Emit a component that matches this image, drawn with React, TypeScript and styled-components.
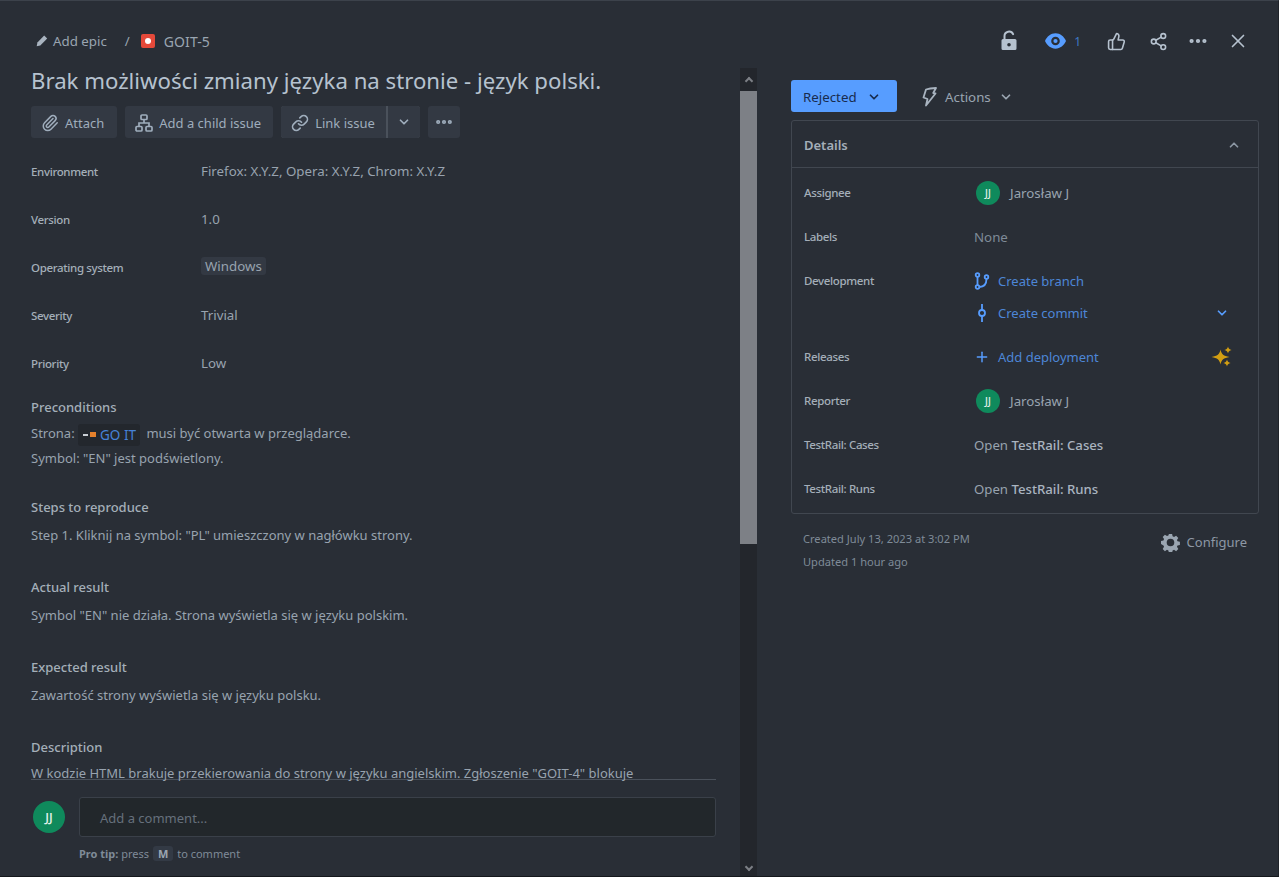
import React from 'react';
import styled, { createGlobalStyle } from 'styled-components';
import { ChevronDown, ChevronUp, Ellipsis, Paperclip, Link, Plus, Share2, ThumbsUp, X } from 'lucide-react';

const GlobalStyle = createGlobalStyle`
  html, body { margin: 0; padding: 0; background: #292e36; }
  body { font-family: 'Noto Sans', 'Liberation Sans', sans-serif; color: #a9b4c0; }
  * { box-sizing: border-box; }
`;

const fields = [
  { label: 'Environment', value: 'Firefox: X.Y.Z, Opera: X.Y.Z, Chrom: X.Y.Z' },
  { label: 'Version', value: '1.0' },
  { label: 'Operating system', value: 'Windows', tag: true },
  { label: 'Severity', value: 'Trivial' },
  { label: 'Priority', value: 'Low' },
];

const App: React.FC = () => {
  return (
    <Page>
      <GlobalStyle />
      <Header>
        <Breadcrumbs>
          <PencilIcon />
          <CrumbText>Add epic</CrumbText>
          <Slash>/</Slash>
          <BugIcon />
          <IssueKey>GOIT-5</IssueKey>
        </Breadcrumbs>
        <HeaderActions>
          <LockIcon />
          <WatchGroup>
            <EyeIcon />
            <WatchCount>1</WatchCount>
          </WatchGroup>
          <ThumbsUp size={19} strokeWidth={2} />
          <ShareSlot>
            <Share2 size={19} strokeWidth={2} />
          </ShareSlot>
          <Ellipsis size={22} strokeWidth={2.6} />
          <X size={22} strokeWidth={1.8} />
        </HeaderActions>
      </Header>
      <Main>
        <LeftPane>
          <LeftColumn>
            <ScrollArea>
              <Title>Brak możliwości zmiany języka na stronie - język polski.</Title>
              <Toolbar>
                <ToolButton $endPad={13}>
                  <Paperclip size={18} strokeWidth={2} />
                  Attach
                </ToolButton>
                <ToolButton $endPad={12}>
                  <HierarchyIcon />
                  Add a child issue
                </ToolButton>
                <SplitGroup>
                  <ToolButton $endPad={11} $joined>
                    <Link size={18} strokeWidth={2.2} />
                    Link issue
                  </ToolButton>
                  <CaretButton>
                    <ChevronDown size={14} strokeWidth={3} />
                  </CaretButton>
                </SplitGroup>
                <MoreButton>
                  <Ellipsis size={20} strokeWidth={3} />
                </MoreButton>
              </Toolbar>
              <FieldList>
                {fields.map((f) => (
                  <FieldRow key={f.label}>
                    <FieldLabel>{f.label}</FieldLabel>
                    {f.tag ? <Tag>{f.value}</Tag> : <FieldValue>{f.value}</FieldValue>}
                  </FieldRow>
                ))}
              </FieldList>
              <Section $gap={27}>
                <SectionTitle>Preconditions</SectionTitle>
                <Paragraphs>
                  <Paragraph>
                    Strona:{' '}
                    <SmartLink>
                      <LinkFavicon />
                      GO IT
                    </SmartLink>{' '}
                    musi być otwarta w przeglądarce.
                  </Paragraph>
                  <Paragraph>Symbol: "EN" jest podświetlony.</Paragraph>
                </Paragraphs>
              </Section>
              <Section>
                <SectionTitle>Steps to reproduce</SectionTitle>
                <BodyText>Step 1. Kliknij na symbol: "PL" umieszczony w nagłówku strony.</BodyText>
              </Section>
              <Section>
                <SectionTitle>Actual result</SectionTitle>
                <BodyText>Symbol "EN" nie działa. Strona wyświetla się w języku polskim.</BodyText>
              </Section>
              <Section>
                <SectionTitle>Expected result</SectionTitle>
                <BodyText>Zawartość strony wyświetla się w języku polsku.</BodyText>
              </Section>
              <Section $gap={0}>
                <SectionTitle>Description</SectionTitle>
                <BodyTight>W kodzie HTML brakuje przekierowania do strony w języku angielskim. Zgłoszenie "GOIT-4" blokuje</BodyTight>
              </Section>
            </ScrollArea>
            <CommentArea>
              <CommentRow>
                <Avatar $size={32}>JJ</Avatar>
                <CommentInput>Add a comment...</CommentInput>
              </CommentRow>
              <ProTip>
                <strong>Pro tip:</strong> press <Kbd>M</Kbd> to comment
              </ProTip>
            </CommentArea>
          </LeftColumn>
          <Scrollbar>
            <ScrollArrow><ArrowGlyph /></ScrollArrow>
            <ScrollThumb />
            <ScrollTrack />
            <ScrollArrow><ArrowGlyph $down /></ScrollArrow>
          </Scrollbar>
        </LeftPane>
        <RightPane>
          <StatusRow>
            <StatusButton>
              Rejected
              <ChevronDown size={14} strokeWidth={3} />
            </StatusButton>
            <ActionsButton>
              <BoltIcon />
              <span>Actions</span>
              <ChevronDown size={14} strokeWidth={3} />
            </ActionsButton>
          </StatusRow>
          <DetailsCard>
            <DetailsHeader>
              Details
              <ChevronUp size={14} strokeWidth={3} />
            </DetailsHeader>
            <DetailsBody>
              <DetailRow>
                <DetailLabel>Assignee</DetailLabel>
                <Person><Avatar $size={24}>JJ</Avatar>Jarosław J</Person>
              </DetailRow>
              <DetailRow>
                <DetailLabel>Labels</DetailLabel>
                <Muted>None</Muted>
              </DetailRow>
              <DetailRow>
                <DetailLabel>Development</DetailLabel>
                <ActionLink><BranchIcon />Create branch</ActionLink>
              </DetailRow>
              <DetailRowShort>
                <span />
                <ActionLink>
                  <CommitIcon />
                  Create commit
                  <EndSlot $tint="#579dff" $inset={17}><ChevronDown size={14} strokeWidth={3} /></EndSlot>
                </ActionLink>
              </DetailRowShort>
              <DetailRow>
                <DetailLabel>Releases</DetailLabel>
                <ActionLink>
                  <Plus size={16} strokeWidth={2.2} />
                  Add deployment
                  <EndSlot $tint="#d29e12" $inset={13}><SparkleIcon /></EndSlot>
                </ActionLink>
              </DetailRow>
              <DetailRow>
                <DetailLabel>Reporter</DetailLabel>
                <Person><Avatar $size={24}>JJ</Avatar>Jarosław J</Person>
              </DetailRow>
              <DetailRow>
                <DetailLabel>TestRail: Cases</DetailLabel>
                <Plain>Open <b>TestRail: Cases</b></Plain>
              </DetailRow>
              <DetailRow>
                <DetailLabel>TestRail: Runs</DetailLabel>
                <Plain>Open <b>TestRail: Runs</b></Plain>
              </DetailRow>
            </DetailsBody>
          </DetailsCard>
          <MetaRow>
            <MetaText>
              <div>Created July 13, 2023 at 3:02 PM</div>
              <div>Updated 1 hour ago</div>
            </MetaText>
            <Configure><GearIcon />Configure</Configure>
          </MetaRow>
        </RightPane>
      </Main>
    </Page>
  );
};

export default App;

const PencilIcon = () => (
  <svg width="14" height="14" viewBox="0 0 14 14" fill="#a9b4c0">
    <path d="M9.200 1.600l3 3-6.900 6.900-3.600.8.700-3.700z" />
  </svg>
);

const BugIcon = () => (
  <svg width="16" height="16" viewBox="0 0 16 16">
    <rect width="14" height="14" x="1" y="1" rx="2" fill="#e5493a" />
    <circle cx="8" cy="8" r="3" fill="#fff" />
  </svg>
);

const LockIcon = () => (
  <svg width="16" height="22" viewBox="0 0 16 22">
    <path d="M3.500 9V6a4.500 4.500 0 0 1 8.600-1.800" fill="none" stroke="#b6c2cf" strokeWidth="2" strokeLinecap="round" />
    <path fillRule="evenodd" fill="#b6c2cf" d="M2 9h12a1.500 1.500 0 0 1 1.500 1.500v8A1.500 1.500 0 0 1 14 20H2A1.500 1.500 0 0 1 .5 18.500v-8A1.500 1.500 0 0 1 2 9zm6 4a1.800 1.800 0 1 0 0 3.600A1.800 1.800 0 0 0 8 13z" />
  </svg>
);

const EyeIcon = () => (
  <svg width="21" height="16" viewBox="0 0 22 16">
    <path fillRule="evenodd" fill="#579dff" d="M11 0c5 0 9 3.500 11 8-2 4.500-6 8-11 8S2 12.500 0 8c2-4.500 6-8 11-8zm0 3.500a4.500 4.500 0 1 0 0 9 4.500 4.500 0 0 0 0-9zm0 2.300a2.200 2.200 0 1 1 0 4.400 2.200 2.200 0 0 1 0-4.400z" />
  </svg>
);

const HierarchyIcon = () => (
  <svg width="18" height="18" viewBox="0 0 18 18" fill="none" stroke="currentColor" strokeWidth="1.700">
    <rect x="6" y="1" width="6" height="4.500" rx="1" />
    <rect x="1" y="12.500" width="6" height="4.500" rx="1" />
    <rect x="11" y="12.500" width="6" height="4.500" rx="1" />
    <path d="M9 5.500V9M4 12.500V9h10v3.500" />
  </svg>
);

const BoltIcon = () => (
  <svg width="16" height="20" viewBox="0 0 16 20" fill="none" stroke="#a9b4c0" strokeWidth="1.800" strokeLinejoin="round">
    <path d="M5 2.500c3-1 6-1.300 10-1.500l-2.800 5 2.300.5L5 18.500l1.500-6.500-4-1.500z" />
  </svg>
);

const BranchIcon = () => (
  <svg width="16" height="18" viewBox="0 0 16 18" fill="none" stroke="#579dff" strokeWidth="1.800">
    <circle cx="3.500" cy="3" r="1.800" />
    <circle cx="3.500" cy="15" r="1.800" />
    <circle cx="12.500" cy="5" r="1.800" />
    <path d="M3.500 5v8M5.300 15c4 0 7.200-2 7.200-8.200" />
  </svg>
);

const CommitIcon = () => (
  <svg width="16" height="18" viewBox="0 0 16 18" fill="none" stroke="#579dff" strokeWidth="1.800">
    <circle cx="8" cy="9" r="3" />
    <path d="M8 0v6M8 12v6" />
  </svg>
);

const SparkleIcon = () => (
  <svg width="22" height="22" viewBox="0 0 22 22" fill="currentColor">
    <path d="M9.500 3.500c1 4.800 3 6.500 9 7.500-6 1-8 2.700-9 7.500-1-4.800-3-6.500-9-7.500 6-1 8-2.700 9-7.500z" />
    <path d="M17 .5c.4 2.100 1.300 3 3.600 3.500-2.300.5-3.200 1.400-3.600 3.500-.4-2.100-1.300-3-3.600-3.500 2.300-.5 3.200-1.400 3.600-3.500z" />
    <path d="M16 13.500c.4 2.100 1.300 3 3.600 3.500-2.300.5-3.200 1.400-3.600 3.500-.4-2.100-1.300-3-3.600-3.500 2.300-.5 3.200-1.400 3.600-3.500z" />
  </svg>
);

const GearIcon = () => (
  <svg width="19" height="19" viewBox="0 0 20 20">
    <path
      fill="#9aa5b1"
      fillRule="evenodd"
      d="M8.300 1h3.400l.5 2.500 1.500.7 2.200-1.400 2.300 2.400-1.400 2.100.6 1.500 2.500.5v3.300l-2.500.5-.6 1.500 1.400 2.200-2.300 2.300-2.200-1.400-1.500.6-.5 2.600H8.300l-.5-2.600-1.500-.6-2.200 1.400-2.300-2.300 1.400-2.200-.6-1.500L0 11.600V8.300l2.600-.5.6-1.500-1.400-2.100 2.300-2.400 2.200 1.400 1.500-.7zM10 6a4 4 0 1 0 0 8 4 4 0 0 0 0-8z"
    />
  </svg>
);

const Page = styled.div`
  display: flex;
  flex-direction: column;
  width: 1279px;
  height: 877px;
  overflow: hidden;
  background: #292e36;
  border-top: 1px solid #3c424b;
  border-right: 1px solid #1f2329;
  border-bottom: 1px solid #15181c;
`;

const Header = styled.header`
  display: flex;
  align-items: center;
  justify-content: space-between;
  height: 67px;
  padding: 25px 29px 12px 35px;
  flex: none;
`;

const Breadcrumbs = styled.nav`
  display: flex;
  align-items: center;
  color: #9aa5b1;
  font-size: 13.300px;
  svg { flex: none; }
`;

const CrumbText = styled.span`
  margin-left: 4px;
`;

const IssueKey = styled.span`
  margin-left: 8px;
  font-size: 14px;
  letter-spacing: 0.1px;
`;

const Slash = styled.span`
  margin: 0 10px 0 18px;
`;

const HeaderActions = styled.div`
  display: flex;
  align-items: center;
  gap: 18px;
  color: #b6c2cf;
`;

const WatchGroup = styled.div`
  display: flex;
  align-items: center;
  gap: 8px;
  margin: 0 8px 0 10px;
`;

const WatchCount = styled.span`
  font-size: 12px;
  color: #3f78c4;
`;

const ShareSlot = styled.span`
  display: flex;
  margin: 0 1px 0 5px;
`;

const Main = styled.main`
  display: flex;
  flex: 1;
  min-height: 0;
`;

const LeftPane = styled.div`
  display: flex;
  width: 757px;
  flex: none;
`;

const LeftColumn = styled.div`
  display: flex;
  flex-direction: column;
  flex: 1;
  min-width: 0;
  padding: 0 24px 0 31px;
`;

const ScrollArea = styled.div`
  flex: none;
  height: 712px;
  border-bottom: 1px solid #4a515b;
`;

const Title = styled.h1`
  margin: 0;
  font-size: 22.200px;
  font-weight: 400;
  line-height: 26px;
  color: #b6c2cf;
`;

const Toolbar = styled.div`
  display: flex;
  gap: 8px;
  margin-top: 12px;
`;

const ToolButton = styled.div<{ $joined?: boolean; $endPad?: number }>`
  display: flex;
  align-items: center;
  gap: 6px;
  height: 32px;
  padding: 1px ${(p) => p.$endPad ?? 12}px 0 10px;
  border-radius: ${(p) => (p.$joined ? '3px 0 0 3px' : '3px')};
  background: #333943;
  color: #9fadbc;
  font-size: 13px;
  svg { flex: none; }
`;

const SplitGroup = styled.div`
  display: flex;
  gap: 2px;
  background: #4a515b;
  border-radius: 3px;
`;

const CaretButton = styled.div`
  display: flex;
  align-items: center;
  justify-content: center;
  width: 32px;
  height: 32px;
  border-radius: 0 3px 3px 0;
  background: #333943;
  color: #9fadbc;
`;

const MoreButton = styled(CaretButton)`
  border-radius: 3px;
`;

const FieldList = styled.div`
  display: flex;
  flex-direction: column;
  margin-top: 9px;
  margin-bottom: 10px;
`;

const FieldRow = styled.div`
  display: grid;
  grid-template-columns: 170px 1fr;
  align-items: center;
  height: 48px;
  justify-items: start;
`;

const FieldLabel = styled.span`
  font-size: 11.500px;
  font-weight: 500;
  letter-spacing: -0.35px;
  color: #a4aeb9;
`;

const FieldValue = styled.span`
  font-size: 13.300px;
  color: #98a3af;
`;

const Tag = styled.span`
  margin-bottom: 2px;
  padding: 0 4px;
  border-radius: 3px;
  background: #333943;
  font-size: 13.300px;
  line-height: 18px;
  color: #98a3af;
`;

const Section = styled.section<{ $gap?: number }>`
  margin-bottom: ${(p) => p.$gap ?? 32}px;
`;

const SectionTitle = styled.h3`
  margin: 0;
  font-size: 13px;
  font-weight: 500;
  line-height: 20px;
  color: #a4aeb9;
`;

const Paragraphs = styled.div`
  margin-top: 4px;
`;

const Paragraph = styled.p`
  margin: 0;
  font-size: 13px;
  line-height: 24px;
  color: #98a3af;
`;

const BodyText = styled.p`
  margin: 8px 0 0;
  font-size: 13px;
  line-height: 20px;
  color: #98a3af;
`;

const BodyTight = styled(BodyText)`
  margin-top: 6px;
  white-space: nowrap;
`;

const SmartLink = styled.span`
  display: inline-flex;
  align-items: center;
  gap: 4px;
  height: 22px;
  padding: 0 4px 0 5px;
  margin: 0 3px 0 0;
  border-radius: 3px;
  background: #23272d;
  color: #4682d8;
  font-size: 13.500px;
  vertical-align: middle;
`;

const LinkFavicon = styled.i`
  display: inline-block;
  width: 13px;
  height: 5px;
  background:
    linear-gradient(#c9ced4, #c9ced4) left center / 5px 2px no-repeat,
    linear-gradient(#e5812c, #e5812c) right center / 6px 5px no-repeat;
`;

const CommentArea = styled.div`
  flex: 1;
  padding-top: 17px;
`;

const CommentRow = styled.div`
  display: flex;
  align-items: center;
  gap: 14px;
  padding-left: 2px;
`;

const Avatar = styled.span<{ $size: number }>`
  display: inline-flex;
  align-items: center;
  justify-content: center;
  flex: none;
  width: ${(p) => p.$size}px;
  height: ${(p) => p.$size}px;
  border-radius: 50%;
  background: #0f8a5c;
  color: #e6f2ec;
  font-size: ${(p) => (p.$size > 28 ? 13 : 10)}px;
  font-weight: 500;
`;

const CommentInput = styled.div`
  flex: 1;
  height: 40px;
  padding: 1px 0 0 20px;
  display: flex;
  align-items: center;
  background: #22272b;
  border: 1px solid #3a4049;
  border-radius: 3px;
  color: #66707c;
  font-size: 13px;
`;

const ProTip = styled.div`
  margin: 9px 0 0 48px;
  font-size: 11px;
  color: #7f8b98;
  strong { font-weight: 700; }
`;

const Kbd = styled.span`
  display: inline-block;
  padding: 0 5px;
  margin: 0 1px;
  border-radius: 3px;
  background: #333a45;
  font-weight: 700;
  color: #9aa5b1;
`;

const Scrollbar = styled.div`
  display: flex;
  flex-direction: column;
  flex: none;
  width: 17px;
`;

const ScrollArrow = styled.div`
  display: flex;
  align-items: center;
  justify-content: center;
  height: 23px;
  flex: none;
  background: #23262c;
  &:last-child { height: 17px; }
`;

const ArrowGlyph = styled.i<{ $down?: boolean }>`
  width: 6px;
  height: 6px;
  border-left: 2px solid #7c7f85;
  border-top: 2px solid #7c7f85;
  transform: translateY(${(p) => (p.$down ? '-1px' : '1px')}) rotate(${(p) => (p.$down ? '225deg' : '45deg')});
`;

const ScrollThumb = styled.div`
  height: 453px;
  flex: none;
  background: #7d8086;
`;

const ScrollTrack = styled.div`
  flex: 1;
  background: #23262c;
`;

const RightPane = styled.aside`
  display: flex;
  flex-direction: column;
  flex: 1;
  min-width: 0;
  padding: 12px 19px 0 34px;
`;

const StatusRow = styled.div`
  display: flex;
  align-items: center;
  gap: 24px;
`;

const StatusButton = styled.div`
  display: flex;
  align-items: center;
  gap: 10px;
  width: 106px;
  height: 32px;
  padding: 2px 0 0 12px;
  border-radius: 3px;
  background: #579dff;
  color: #172b4d;
  font-size: 13.300px;
`;

const ActionsButton = styled.div`
  display: flex;
  align-items: center;
  gap: 8px;
  padding-top: 2px;
  color: #9aa5b1;
  font-size: 13.300px;
`;

const DetailsCard = styled.div`
  margin-top: 8px;
  border: 1px solid #414750;
  border-radius: 3px;
  height: 394px;
`;

const DetailsHeader = styled.div`
  display: flex;
  align-items: center;
  justify-content: space-between;
  height: 47px;
  padding: 1px 17px 0 12px;
  border-bottom: 1px solid #414750;
  font-size: 13px;
  font-weight: 600;
  color: #a4aeb9;
  svg { color: #8b96a2; }
`;

const DetailsBody = styled.div`
  display: flex;
  flex-direction: column;
  padding: 3px 12px 0;
`;

const DetailRow = styled.div`
  display: grid;
  grid-template-columns: 170px 1fr;
  align-items: center;
  height: 44px;
`;

const DetailRowShort = styled(DetailRow)`
  height: 32px;
  margin: -6px 0 6px;
`;

const DetailLabel = styled.span`
  padding-bottom: 2px;
  font-size: 11.500px;
  font-weight: 500;
  letter-spacing: -0.35px;
  color: #a4aeb9;
`;

const Person = styled.span`
  display: flex;
  align-items: center;
  gap: 10px;
  padding-left: 2px;
  font-size: 13.300px;
  color: #98a3af;
`;

const Muted = styled.span`
  font-size: 13.300px;
  color: #7f8b98;
`;

const Plain = styled.span`
  font-size: 13.200px;
  color: #98a3af;
  b { font-weight: 500; color: #a9b4c0; }
`;

const ActionLink = styled.span`
  display: flex;
  align-items: center;
  gap: 8px;
  font-size: 13px;
  color: #4d86d6;
  svg { color: #579dff; flex: none; }
`;

const EndSlot = styled.span<{ $tint: string; $inset: number }>`
  display: flex;
  margin-left: auto;
  margin-right: ${(p) => p.$inset}px;
  svg { color: ${(p) => p.$tint}; }
`;

const MetaRow = styled.div`
  display: flex;
  justify-content: space-between;
  padding: 14px 12px 0 12px;
`;

const MetaText = styled.div`
  font-size: 11.100px;
  line-height: 22.500px;
  color: #7f8b98;
`;

const Configure = styled.div`
  display: flex;
  align-items: center;
  gap: 7px;
  height: 26px;
  padding-top: 2px;
  font-size: 13px;
  color: #8d98a5;
`;
